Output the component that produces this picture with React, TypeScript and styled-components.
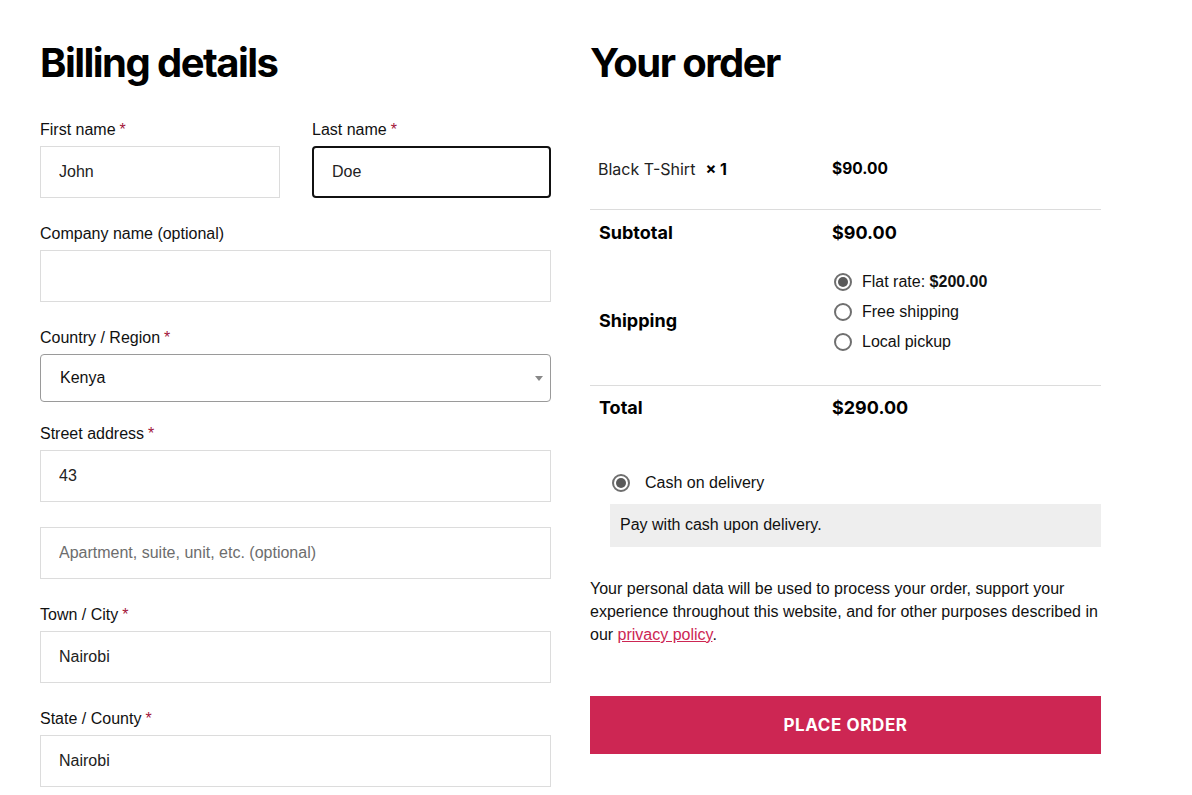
import React from "react";
import styled, { createGlobalStyle } from "styled-components";

const GlobalStyle = createGlobalStyle`
  * { box-sizing: border-box; }
  body {
    margin: 0;
    background: #fff;
    color: #000;
    font-family: "Liberation Sans", Arial, sans-serif;
    font-size: 16px;
  }
`;

const Page = styled.div`
  display: grid;
  grid-template-columns: 511px 511px;
  column-gap: 39px;
  padding: 41px 0 0 40px;
`;

const Column = styled.div`
  display: flex;
  flex-direction: column;
`;

const Heading = styled.h2<{ $gap: number }>`
  margin: 0 0 ${(p) => p.$gap}px;
  font-family: Inter, "Liberation Sans", sans-serif;
  font-weight: 700;
  font-size: 40px;
  line-height: 44px;
  letter-spacing: -1.55px;
  color: #000;
`;

const Row = styled.div`
  display: grid;
  grid-template-columns: 240px 239px;
  column-gap: 32px;
`;

const Field = styled.div<{ $mb?: number }>`
  display: flex;
  flex-direction: column;
  margin-bottom: ${(p) => (p.$mb ?? 24)}px;
`;

const Label = styled.label`
  display: block;
  line-height: 24px;
  margin-bottom: 4px;
  color: #111;
`;

const Req = styled.span`
  color: #a3153a;
  margin-left: 4px;
`;

const Input = styled.input<{ $focus?: boolean }>`
  height: 52px;
  width: 100%;
  padding: 0 18px;
  font-family: "Liberation Sans", Arial, sans-serif;
  font-size: 16px;
  color: #222;
  background: #fff;
  border: ${(p) => (p.$focus ? "2px solid #111" : "1px solid #dcdcdc")};
  border-radius: ${(p) => (p.$focus ? "4px" : "0")};
  outline: none;
  &::placeholder {
    color: #6d6d6d;
  }
`;

const SelectBox = styled.div`
  position: relative;
  display: flex;
  align-items: center;
  height: 48px;
  padding: 0 19px;
  border: 1px solid #9a9a9a;
  border-radius: 4px;
  color: #111;
  line-height: 24px;
`;

const Caret = styled.span`
  position: absolute;
  right: 7px;
  top: 21px;
  width: 0;
  height: 0;
  border-left: 4px solid transparent;
  border-right: 4px solid transparent;
  border-top: 5px solid #888;
`;

const Table = styled.div`
  display: flex;
  flex-direction: column;
  font-family: Inter, "Liberation Sans", sans-serif;
`;

const TRow = styled.div<{ $pt: number; $pb: number; $border?: boolean }>`
  display: grid;
  grid-template-columns: 234px 1fr;
  align-items: center;
  padding: ${(p) => p.$pt}px 8px ${(p) => p.$pb}px;
  border-bottom: ${(p) => (p.$border ? "1px solid #dcdcdc" : "none")};
  line-height: 24px;
`;

const ProductName = styled.div`
  font-size: 16px;
  color: #222;
`;

const Qty = styled.strong`
  font-weight: 700;
  margin-left: 10px;
  color: #000;
`;

const Amount = styled.div<{ $size: number }>`
  font-size: ${(p) => p.$size}px;
  font-weight: 700;
  color: #000;
`;

const RowLabel = styled.div`
  font-size: 18px;
  font-weight: 700;
  color: #000;
  padding-left: 1px;
`;

const Options = styled.ul`
  list-style: none;
  margin: 0 0 17px;
  padding: 0;
  font-family: "Liberation Sans", Arial, sans-serif;
  font-size: 16px;
  color: #111;
`;

const Option = styled.li`
  display: flex;
  align-items: center;
  height: 30px;
  gap: 10px;
  padding-left: 2px;
`;

const Radio = styled.span<{ $checked?: boolean }>`
  position: relative;
  width: 18px;
  height: 18px;
  border-radius: 50%;
  border: 2px solid #6f6f6f;
  flex-shrink: 0;
  &::after {
    content: "";
    display: ${(p) => (p.$checked ? "block" : "none")};
    position: absolute;
    left: 2px;
    top: 2px;
    width: 10px;
    height: 10px;
    border-radius: 50%;
    background: #5a5a5a;
  }
`;

const Payment = styled.div`
  margin-top: 40px;
  padding-left: 20px;
`;

const PayMethod = styled.div`
  display: flex;
  align-items: center;
  gap: 15px;
  line-height: 24px;
  padding-left: 2px;
  margin-bottom: 9px;
  color: #111;
`;

const PayBox = styled.div`
  background: #eeeeee;
  padding: 9px 10px 10px;
  line-height: 24px;
  color: #111;
`;

const Privacy = styled.p`
  margin: 30px 0 0;
  line-height: 23px;
  color: #111;
  a {
    color: #cd2653;
    text-decoration: underline;
  }
`;

const PlaceOrder = styled.button`
  margin-top: 50px;
  height: 58px;
  width: 100%;
  border: none;
  background: #cd2653;
  color: #fff;
  font-family: Inter, "Liberation Sans", sans-serif;
  font-weight: 700;
  font-size: 17px;
  letter-spacing: 0.6px;
  text-transform: uppercase;
  cursor: pointer;
`;

const TextField: React.FC<{
  label?: string;
  required?: boolean;
  value?: string;
  placeholder?: string;
  focus?: boolean;
  mb?: number;
}> = ({ label, required, value, placeholder, focus, mb }) => (
  <Field $mb={mb}>
    {label && (
      <Label>
        {label}
        {required && <Req>*</Req>}
      </Label>
    )}
    <Input
      $focus={focus}
      defaultValue={value}
      placeholder={placeholder}
      readOnly
    />
  </Field>
);

export default function App() {
  return (
    <>
      <GlobalStyle />
      <Page>
        <Column>
          <Heading $gap={33}>Billing details</Heading>
          <Row>
            <TextField label="First name" required value="John" />
            <TextField label="Last name" required value="Doe" focus />
          </Row>
          <TextField label="Company name (optional)" />
          <Field $mb={20}>
            <Label>
              Country / Region<Req>*</Req>
            </Label>
            <SelectBox>
              Kenya
              <Caret />
            </SelectBox>
          </Field>
          <TextField label="Street address" required value="43" mb={25} />
          <TextField placeholder="Apartment, suite, unit, etc. (optional)" />
          <TextField label="Town / City" required value="Nairobi" />
          <TextField label="State / County" required value="Nairobi" />
        </Column>
        <Column>
          <Heading $gap={43}>Your order</Heading>
          <Table>
            <TRow $pt={29} $pb={28} $border>
              <ProductName>
                Black T-Shirt<Qty>× 1</Qty>
              </ProductName>
              <Amount $size={15.5}>$90.00</Amount>
            </TRow>
            <TRow $pt={11} $pb={11}>
              <RowLabel>Subtotal</RowLabel>
              <Amount $size={18}>$90.00</Amount>
            </TRow>
            <TRow $pt={11} $pb={11} $border>
              <RowLabel>Shipping</RowLabel>
              <Options>
                <Option>
                  <Radio $checked />
                  <span>
                    Flat rate: <b>$200.00</b>
                  </span>
                </Option>
                <Option>
                  <Radio />
                  <span>Free shipping</span>
                </Option>
                <Option>
                  <Radio />
                  <span>Local pickup</span>
                </Option>
              </Options>
            </TRow>
            <TRow $pt={10} $pb={11}>
              <RowLabel>Total</RowLabel>
              <Amount $size={18}>$290.00</Amount>
            </TRow>
          </Table>
          <Payment>
            <PayMethod>
              <Radio $checked />
              <span>Cash on delivery</span>
            </PayMethod>
            <PayBox>Pay with cash upon delivery.</PayBox>
          </Payment>
          <Privacy>
            Your personal data will be used to process your order, support your
            experience throughout this website, and for other purposes described
            in our <a href="#privacy">privacy policy</a>.
          </Privacy>
          <PlaceOrder>Place order</PlaceOrder>
        </Column>
      </Page>
    </>
  );
}
